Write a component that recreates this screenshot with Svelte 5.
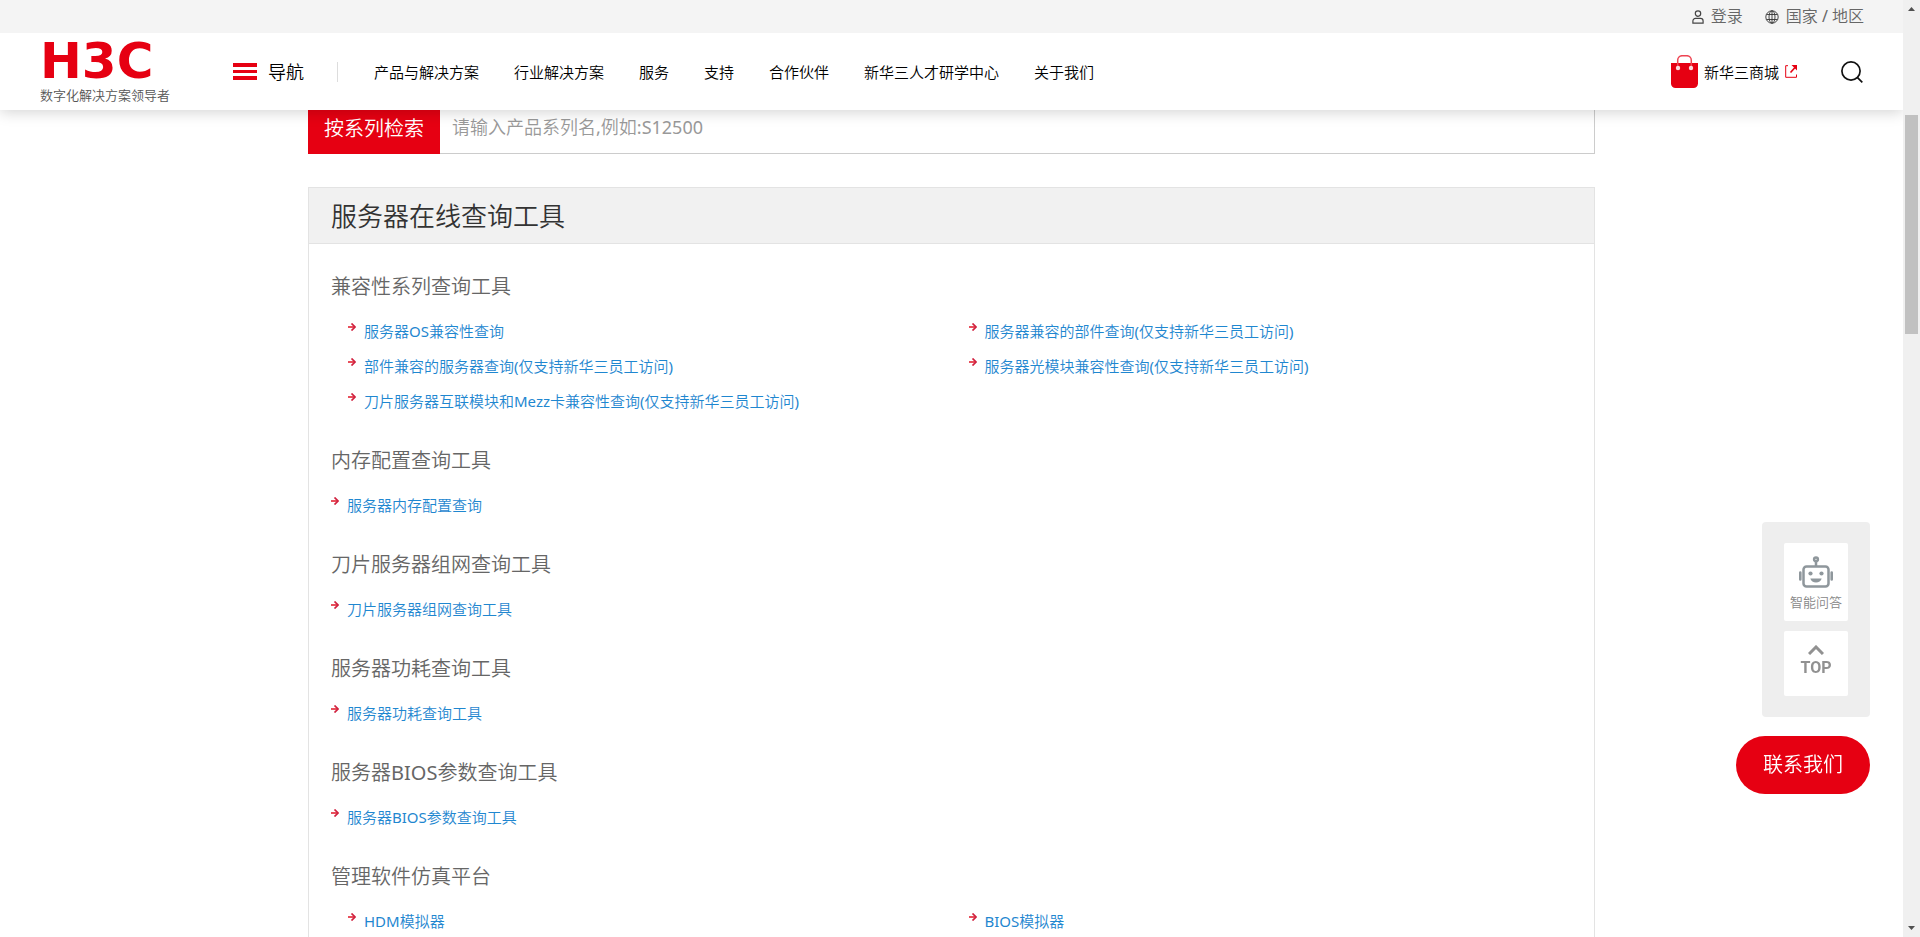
<script lang="ts">
	type Group = { title: string; columns?: boolean; links: string[] };

	const navItems = [
		'产品与解决方案',
		'行业解决方案',
		'服务',
		'支持',
		'合作伙伴',
		'新华三人才研学中心',
		'关于我们'
	];

	const groups: Group[] = [
		{
			title: '兼容性系列查询工具',
			columns: true,
			links: [
				'服务器OS兼容性查询',
				'服务器兼容的部件查询(仅支持新华三员工访问)',
				'部件兼容的服务器查询(仅支持新华三员工访问)',
				'服务器光模块兼容性查询(仅支持新华三员工访问)',
				'刀片服务器互联模块和Mezz卡兼容性查询(仅支持新华三员工访问)'
			]
		},
		{ title: '内存配置查询工具', links: ['服务器内存配置查询'] },
		{ title: '刀片服务器组网查询工具', links: ['刀片服务器组网查询工具'] },
		{ title: '服务器功耗查询工具', links: ['服务器功耗查询工具'] },
		{ title: '服务器BIOS参数查询工具', links: ['服务器BIOS参数查询工具'] },
		{ title: '管理软件仿真平台', columns: true, links: ['HDM模拟器', 'BIOS模拟器'] }
	];

	let series = $state('');
</script>

<div class="page">
	<div class="topbar">
		<a href="#login" class="top-link">
			<svg width="12" height="14" viewBox="0 0 12 14" fill="none" stroke="#444" stroke-width="1.2">
				<circle cx="6" cy="3.6" r="2.7" />
				<path d="M.9 13.2V11a2.6 2.6 0 0 1 2.6-2.6h5A2.6 2.6 0 0 1 11.1 11v2.2z" />
			</svg>
			登录
		</a>
		<a href="#region" class="top-link">
			<svg width="14" height="14" viewBox="0 0 14 14" fill="none" stroke="#333" stroke-width="0.9">
				<circle cx="7" cy="7" r="6.2" />
				<ellipse cx="7" cy="7" rx="3" ry="6.2" />
				<path d="M7 .8v12.4M1.5 4.5h11M1.5 9.5h11" />
			</svg>
			国家 / 地区
		</a>
	</div>

	<header class="header">
		<a href="#home" class="logo">
			<strong>H3C</strong>
			<span>数字化解决方案领导者</span>
		</a>
		<button type="button" class="menu">
			<svg width="24" height="17" viewBox="0 0 24 17" fill="#e60012">
				<path d="M0 0h24v4H0zM0 7h24v3H0zM0 13h24v4H0z" />
			</svg>
			导航
		</button>
		<nav class="nav">
			{#each navItems as item}
				<a href="#nav">{item}</a>
			{/each}
		</nav>
		<a href="#mall" class="mall">
			<svg width="27" height="33" viewBox="0 0 27 33">
				<path d="M0 8h27v20.5a4.5 4.5 0 0 1-4.5 4.5h-18A4.5 4.5 0 0 1 0 28.5z" fill="#e60012" />
				<path d="M6.7 12V5.2A4.5 4.5 0 0 1 11.2.7h4.6a4.5 4.5 0 0 1 4.5 4.5V12" fill="none" stroke="#ee4452" stroke-width="1.5" />
				<circle cx="7" cy="13" r="2.2" fill="#fbdcdf" />
				<circle cx="20" cy="13" r="2.2" fill="#fbdcdf" />
			</svg>
			<span>新华三商城</span>
			<svg width="12" height="13" viewBox="0 0 12 13" fill="none" stroke="#e60012">
				<path d="M3 .7H.7V12.3H11.5V9.5" stroke-width="1" />
				<path d="M5.5 7.5L10 2.5" stroke-width="1.6" />
				<path d="M6.5 0H12v5.5z" fill="#e60012" stroke="none" />
			</svg>
		</a>
		<button type="button" class="search" aria-label="搜索">
			<svg width="22" height="22" viewBox="0 0 22 22" fill="none" stroke="#111" stroke-width="1.7">
				<circle cx="10" cy="10" r="9.1" />
				<path d="M16.3 16.3l5 5" />
			</svg>
		</button>
	</header>

	<main class="main">
		<form class="series">
			<button type="submit">按系列检索</button>
			<input type="text" aria-label="按系列检索" placeholder="请输入产品系列名,例如:S12500" bind:value={series} />
		</form>

		<section class="panel">
			<h2>服务器在线查询工具</h2>
			<div class="groups">
				{#each groups as group}
					<div class="group">
						<h3>{group.title}</h3>
						<ul class:columns={group.columns}>
							{#each group.links as link}
								<li>
									<svg class="arrow" width="8" height="8" viewBox="0 0 8 8" fill="none" stroke="#d0213f">
										<path d="M0 4h6" stroke="#e8505c" stroke-width="2" />
										<path d="M3.5.5L7 4 3.5 7.5" stroke-width="1.7" />
									</svg>
									<a href="#tool">{link}</a>
								</li>
							{/each}
						</ul>
					</div>
				{/each}
			</div>
		</section>
	</main>

	<!-- Floating helpers -->
	<aside class="float">
		<div class="float-box">
			<button type="button" class="card robot">
				<svg width="36" height="32" viewBox="0 0 36 32" fill="none" stroke="#8f979c" stroke-width="2.5">
					<circle cx="18" cy="3.3" r="1.9" />
					<path d="M18 5.5V10" />
					<rect x="5.5" y="10.5" width="25" height="20" rx="3" />
					<path d="M2.3 16.5v7M33.7 16.5v7" stroke-width="2.6" stroke-linecap="round" />
					<circle cx="12.5" cy="17.5" r="2.1" fill="#8f979c" stroke="none" />
					<circle cx="23.5" cy="17.5" r="2.1" fill="#8f979c" stroke="none" />
					<path d="M12.3 22.5h11.4c-.8 2.6-2.9 4-5.7 4s-4.9-1.4-5.7-4z" fill="#8f979c" stroke="none" />
				</svg>
				智能问答
			</button>
			<button type="button" class="card top">
				<svg width="16" height="10" viewBox="0 0 16 10" fill="none" stroke="#919191" stroke-width="3">
					<path d="M1 9l7-7 7 7" />
				</svg>
				TOP
			</button>
		</div>
		<a href="#contact" class="contact">联系我们</a>
	</aside>

	<div class="scrollbar">
		<svg width="7" height="4" viewBox="0 0 7 4"><path d="M0 4l3.5-4L7 4z" fill="#505050" /></svg>
		<div class="thumb"></div>
		<svg width="7" height="4" viewBox="0 0 7 4"><path d="M0 0l3.5 4L7 0z" fill="#505050" /></svg>
	</div>
</div>

<style>
	:global(body) {
		margin: 0;
		background: #fff;
	}

	.page {
		box-sizing: border-box;
		position: relative;
		height: 100vh;
		padding-right: 17px;
		overflow: hidden;
		font-family: 'Noto Sans', 'Noto Sans CJK SC DemiLight', 'Noto Sans CJK SC', sans-serif;
		color: #666;
	}

	a {
		color: inherit;
		text-decoration: none;
	}

	button {
		padding: 0;
		border: 0;
		background: none;
		font: inherit;
		color: inherit;
		cursor: pointer;
	}

	svg {
		display: block;
		flex: none;
	}

	/* Top bar */
	.topbar {
		position: relative;
		z-index: 3;
		display: flex;
		justify-content: flex-end;
		gap: 22px;
		height: 33px;
		padding-right: 39px;
		background: #f4f4f4;
		font-size: 16px;
		line-height: 33px;
	}

	.top-link {
		display: flex;
		align-items: center;
		gap: 7px;
	}

	/* Header */
	.header {
		position: relative;
		z-index: 2;
		display: flex;
		align-items: center;
		height: 77px;
		padding: 0 40px;
		background: #fff;
		box-shadow: 0 2px 14px rgba(0, 0, 0, 0.18);
		font-size: 15px;
		color: #000;
		white-space: nowrap;
	}

	.logo {
		display: flex;
		flex-direction: column;
		gap: 4px;
		width: 193px;
	}

	.logo strong {
		font-family: 'DejaVu Sans', sans-serif;
		font-size: 50px;
		font-weight: 700;
		line-height: 42px;
		color: #e60012;
	}

	.logo span {
		font-size: 13px;
		line-height: 18px;
		color: #555;
	}

	.menu {
		display: flex;
		align-items: center;
		gap: 11px;
		padding-right: 33px;
		border-right: 1px solid #ddd;
		font-size: 18px;
		line-height: 20px;
	}

	.nav {
		display: flex;
		flex: 1;
		gap: 35px;
		padding-left: 36px;
	}

	.mall {
		display: flex;
		align-items: center;
		gap: 6px;
	}

	.search {
		margin-left: 44px;
	}

	/* Content */
	.main {
		width: calc(100% - 616px);
		min-width: 960px;
		margin: -10px auto 0;
	}

	.series {
		display: flex;
		height: 54px;
		margin-bottom: 33px;
	}

	.series button {
		width: 132px;
		background: #e60012;
		font-size: 20px;
		color: #fff;
	}

	.series input {
		box-sizing: border-box;
		flex: 1;
		padding: 0 12px;
		border: 1px solid #ccc;
		border-left: 0;
		outline: 0;
		font: inherit;
		font-size: 18px;
		color: #333;
	}

	.series input::placeholder {
		color: #999;
	}

	.panel {
		border: 1px solid #e3e3e3;
	}

	.panel h2 {
		margin: 0;
		padding: 2px 22px 0;
		border-bottom: 1px solid #e3e3e3;
		background: #f1f1f1;
		font-size: 26px;
		font-weight: inherit;
		line-height: 53px;
		color: #333;
	}

	.groups {
		display: flex;
		flex-direction: column;
		gap: 27px;
		padding: 28px 22px;
	}

	.group h3 {
		margin: 0 0 12px;
		font-size: 20px;
		font-weight: inherit;
		line-height: 30px;
	}

	.group ul {
		display: grid;
		margin: 0;
		padding: 0;
		list-style: none;
	}

	.group ul.columns {
		grid-template-columns: 1fr 1fr;
	}

	.group li {
		display: flex;
		gap: 8px;
		font-size: 15px;
		line-height: 35px;
		color: #1f87d0;
		white-space: nowrap;
	}

	.columns li {
		padding-left: 17px;
	}

	.arrow {
		margin-top: 9px;
	}

	/* Floating helpers */
	.float {
		position: fixed;
		right: 50px;
		bottom: 143px;
		z-index: 3;
		display: flex;
		flex-direction: column;
		align-items: flex-end;
		gap: 19px;
	}

	.float-box {
		display: flex;
		flex-direction: column;
		gap: 10px;
		padding: 21px 22px;
		border-radius: 4px;
		background: #eee;
	}

	.card {
		display: flex;
		flex-direction: column;
		align-items: center;
		justify-content: center;
		width: 64px;
		border-radius: 2px;
		background: #fff;
		color: #888;
	}

	.robot {
		gap: 4px;
		height: 78px;
		padding-top: 4px;
		font-size: 13px;
		line-height: 20px;
	}

	.top {
		gap: 4px;
		height: 65px;
		padding-bottom: 6px;
		font-family: Roboto, sans-serif;
		font-size: 16px;
		font-weight: 700;
		line-height: 18px;
		color: #919191;
	}

	.contact {
		padding: 0 27px;
		border-radius: 29px;
		background: #e60012;
		font-size: 20px;
		line-height: 58px;
		color: #fff;
	}

	/* Page scrollbar */
	.scrollbar {
		position: fixed;
		top: 0;
		right: 0;
		bottom: 0;
		z-index: 4;
		box-sizing: border-box;
		display: flex;
		flex-direction: column;
		align-items: center;
		justify-content: space-between;
		width: 17px;
		padding: 7px 0;
		background: #f0f0f0;
	}

	.thumb {
		width: 13px;
		height: 219px;
		margin: 104px 0 auto;
		background: #c1c1c1;
	}
</style>
